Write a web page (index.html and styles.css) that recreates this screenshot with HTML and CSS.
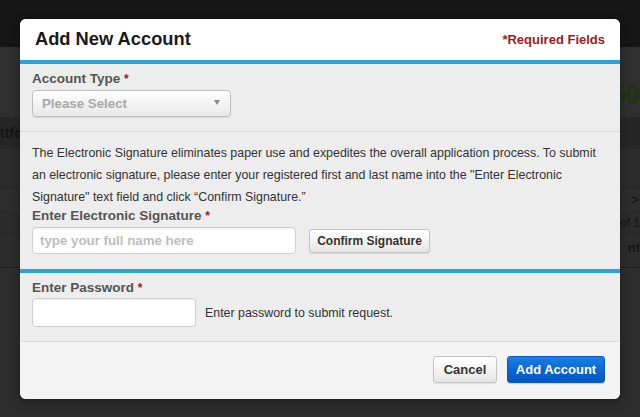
FILE: index.html
```html
<!DOCTYPE html>
<html>
<head>
<meta charset="utf-8">
<link rel="stylesheet" href="styles.css">
</head>
<body>
<div class="page">
  <div class="topbar"></div>
  <div class="bg-row bg-hero"><span></span><span class="bg-amount">60</span></div>
  <div class="bg-row bg-head"><span class="bg-left">ttfor</span><span></span></div>
  <div class="bg-row bg-r3"></div>
  <div class="bg-row bg-r4"><span></span><span class="bg-right bg-chev">&gt;</span></div>
  <div class="bg-row bg-r5"><span></span><span class="bg-right">of 1</span></div>
  <div class="bg-row bg-r6"><span></span><span class="bg-right bold">nt</span></div>
  <div class="bg-rest"></div>
</div>

<div class="modal">
  <div class="modal-header">
    <h1 class="modal-title">Add New Account</h1>
    <span class="required-note">*Required Fields</span>
  </div>

  <div class="section section-type">
    <div class="field-label">Account Type <span class="star">*</span></div>
    <div class="select">
      <span class="select-text">Please Select</span>
      <span class="select-arrow"></span>
    </div>
  </div>

  <div class="section section-sign">
    <p class="info">The Electronic Signature eliminates paper use and expedites the overall application process. To submit an electronic signature, please enter your registered first and last name into the "Enter Electronic Signature" text field and click “Confirm Signature.”</p>
    <div class="field-label tight">Enter Electronic Signature <span class="star">*</span></div>
    <div class="row">
      <div class="input input-sign"><span class="placeholder">type your full name here</span></div>
      <button class="btn btn-light btn-confirm">Confirm Signature</button>
    </div>
  </div>

  <div class="section section-pass">
    <div class="field-label">Enter Password <span class="star">*</span></div>
    <div class="row">
      <div class="input input-pass"></div>
      <span class="hint">Enter password to submit request.</span>
    </div>
  </div>

  <div class="modal-footer">
    <button class="btn btn-light btn-cancel">Cancel</button>
    <button class="btn btn-primary">Add Account</button>
  </div>
</div>
</body>
</html>
```

FILE: styles.css
```css
* { box-sizing: border-box; }
html, body {
  margin: 0;
  padding: 0;
  width: 640px;
  height: 417px;
  overflow: hidden;
  font-family: "Liberation Sans", Arial, sans-serif;
  background: #2c2c2c;
}

.page {
  display: flex;
  flex-direction: column;
  width: 640px;
  height: 417px;
}
.topbar { height: 47px; background: #151515; }
.bg-row {
  display: flex;
  justify-content: space-between;
  align-items: center;
  overflow: hidden;
  white-space: nowrap;
  color: #141414;
  font-size: 13px;
  line-height: 16px;
  font-family: "Liberation Sans", Arial, sans-serif;
}
.bg-hero {
  height: 70px;
  background: #2f2f2f;
  align-items: flex-end;
  padding-bottom: 7px;
}
.bg-amount {
  font-size: 26px;
  line-height: 32px;
  font-weight: bold;
  color: #1f3410;
  letter-spacing: -1px;
  padding-right: 1px;
}
.bg-head { height: 31px; background: #262626; font-weight: bold; }
.bg-left { font-size: 14px; color: #151515; }
.bg-r3 { height: 39px; background: #2c2c2c; border-top: 1px solid #272727; }
.bg-r4 { height: 24px; background: #2d2d2d; border-top: 1px solid #262626; }
.bg-r5 { height: 23px; background: #2b2b2b; }
.bg-r6 {
  height: 34px;
  background: #2c2c2c;
  border-top: 1px solid #262626;
  border-bottom: 1px solid #222;
  align-items: flex-start;
  padding-top: 5px;
}
.bg-right { color: #151515; font-size: 12px; }
.bg-chev { font-size: 13px; font-weight: bold; margin-right: 1px; }
.bold { font-weight: bold; font-size: 13px; }
.bg-rest { flex: 1; background: #2d2d2d; }

.modal {
  position: absolute;
  left: 20px;
  top: 19px;
  width: 600px;
  height: 380px;
  border-radius: 6px;
  overflow: hidden;
  background: #ededed;
  display: flex;
  flex-direction: column;
  box-shadow: 0 2px 10px rgba(0,0,0,0.4);
}

.modal-header {
  height: 45px;
  background: #fff;
  border-bottom: 4px solid #29a3dc;
  display: flex;
  justify-content: space-between;
  align-items: center;
  padding: 0 15px 2px 15px;
}
.modal-title {
  margin: 0;
  font-size: 18.3px;
  font-weight: bold;
  color: #1a1a1a;
}
.required-note {
  font-size: 13px;
  font-weight: bold;
  color: #9b1b1e;
  margin-top: 2px;
}

.section { padding: 0 12px; }
.section-type {
  height: 68px;
  padding-top: 6px;
  border-bottom: 1px solid #d9d9d9;
}
.field-label {
  font-size: 13.5px;
  font-weight: bold;
  color: #555;
  line-height: 18px;
  margin-bottom: 2px;
}
.field-label.tight { line-height: 16px; margin-bottom: 3px; }
.star { color: #9b1b1e; font-size: 12px; }

.select {
  width: 199px;
  height: 27px;
  border: 1px solid #bdbdbd;
  border-radius: 4px;
  background: linear-gradient(#ffffff, #f3f3f3 50%, #e9e9e9);
  box-shadow: 0 1px 1px rgba(0,0,0,0.08);
  display: flex;
  align-items: center;
  justify-content: space-between;
  padding: 0 10px 0 9px;
}
.select-text { font-size: 13.3px; font-weight: bold; color: #a9a9a9; }
.select-arrow {
  width: 0;
  height: 0;
  border-left: 3.5px solid transparent;
  border-right: 3.5px solid transparent;
  border-top: 5px solid #8a8a8a;
  margin-bottom: 2px;
}

.section-sign {
  height: 141px;
  padding-top: 10px;
  border-bottom: 4px solid #29a3dc;
}
.info {
  margin: 0;
  font-size: 12.4px;
  line-height: 22px;
  color: #333;
}
.row {
  display: flex;
  align-items: center;
}
.input {
  background: #fff;
  border: 1px solid #cfcfcf;
  border-radius: 4px;
  box-shadow: inset 0 1px 1px rgba(0,0,0,0.05);
  display: flex;
  align-items: center;
}
.input-sign { width: 264px; height: 27px; padding-left: 7px; }
.placeholder { font-size: 13.3px; font-weight: bold; color: #bdbdbd; }
.input-pass { width: 164px; height: 29px; }

.btn {
  font-family: "Liberation Sans", Arial, sans-serif;
  font-weight: bold;
  border-radius: 3px;
  padding: 0;
  cursor: pointer;
}
.btn-light {
  background: linear-gradient(#ffffff, #f1f1f1 60%, #e4e4e4);
  border: 1px solid #c4c4c4;
  color: #333;
  box-shadow: 0 1px 1px rgba(0,0,0,0.08);
}
.btn-confirm {
  margin-left: 13px;
  width: 121px;
  height: 24px;
  font-size: 12px;
}

.section-pass {
  height: 69px;
  padding-top: 6px;
  border-bottom: 1px solid #dcdcdc;
}
.section-pass .field-label { line-height: 17px; margin-bottom: 1px; }
.hint { font-size: 12.4px; color: #333; margin-left: 9px; }

.modal-footer {
  flex: 1;
  background: #f4f4f4;
  display: flex;
  justify-content: flex-end;
  align-items: flex-start;
  padding: 14px 15px 0 0;
  gap: 10px;
}
.btn-cancel { width: 64px; height: 27px; font-size: 13px; }
.btn-primary {
  width: 98px;
  height: 27px;
  font-size: 13px;
  color: #fff;
  border: 1px solid #0b5cc0;
  background: linear-gradient(#1b7fe3, #0a68d4 50%, #0056c2);
  box-shadow: 0 1px 1px rgba(0,0,0,0.15);
}
```
